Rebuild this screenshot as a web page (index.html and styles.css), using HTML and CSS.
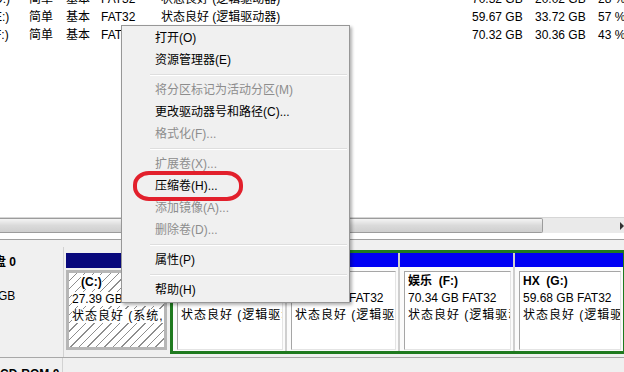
FILE: index.html
```html
<!DOCTYPE html>
<html lang="zh-CN">
<head>
  <meta charset="UTF-8" />
  <title>磁盘管理</title>
  <link rel="stylesheet" href="styles.css">
</head>
<body>

  <!-- 卷列表 -->
  <div class="list">
    <div class="rows">
      <div class="row"><span class="drv">(D:)</span><span>简单</span><span>基本</span><span>FAT32</span><span>状态良好 (逻辑驱动器)</span><span>70.32 GB</span><span>20.02 GB</span><span>28 %</span></div>
      <div class="row"><span class="drv">(E:)</span><span>简单</span><span>基本</span><span>FAT32</span><span>状态良好 (逻辑驱动器)</span><span>59.67 GB</span><span>33.72 GB</span><span>57 %</span></div>
      <div class="row"><span class="drv">(F:)</span><span>简单</span><span>基本</span><span>FAT32</span><span>状态良好 (逻辑驱动器)</span><span>70.32 GB</span><span>30.36 GB</span><span>43 %</span></div>
    </div>
  </div>

  <div class="hscroll">
    <div class="thumb"></div>
    <div class="track"><span class="arrow"></span></div>
  </div>

  <!-- 磁盘图形视图 -->
  <div class="panel">
    <div class="disk">
      <div class="disk-label">
        <div class="disk-name">磁盘 0</div>
        <div class="disk-line">基本</div>
        <div class="disk-line">298.09 GB</div>
        <div class="disk-line">联机</div>
      </div>
      <div class="parts">
        <div class="part-c">
          <div class="bar primary"></div>
          <div class="hatch">
            <div class="txt"><b class="cname">(C:)</b></div>
            <div class="txt"><span>27.39 GB NTFS</span></div>
            <div class="txt status"><span>状态良好 (系统, 启动, 页面文件)</span></div>
          </div>
        </div>
        <div class="ext">
          <div class="logical w-d">
            <div class="bar"></div>
            <div class="cell"><div class="cell-in">
              <div class="txt"><b>软件&nbsp;&nbsp;(D:)</b></div>
              <div class="txt">70.32 GB FAT32</div>
              <div class="txt status">状态良好 (逻辑驱动器)</div>
            </div></div>
          </div>
          <div class="logical w-e">
            <div class="bar"></div>
            <div class="cell"><div class="cell-in">
              <div class="txt"><b>文档&nbsp;&nbsp;(E:)</b></div>
              <div class="txt">59.67 GB FAT32</div>
              <div class="txt status">状态良好 (逻辑驱动器)</div>
            </div></div>
          </div>
          <div class="logical w-f">
            <div class="bar"></div>
            <div class="cell"><div class="cell-in">
              <div class="txt"><b>娱乐&nbsp;&nbsp;(F:)</b></div>
              <div class="txt">70.34 GB FAT32</div>
              <div class="txt status">状态良好 (逻辑驱动器)</div>
            </div></div>
          </div>
          <div class="logical w-g">
            <div class="bar"></div>
            <div class="cell"><div class="cell-in">
              <div class="txt"><b>HX&nbsp;&nbsp;(G:)</b></div>
              <div class="txt">59.68 GB FAT32</div>
              <div class="txt status">状态良好 (逻辑驱动器)</div>
            </div></div>
          </div>
        </div>
      </div>
    </div>
    <div class="cdrom">
      <div class="cd-label">CD-ROM 0</div>
    </div>
  </div>

  <!-- 右键菜单 -->
  <div class="menu">
    <div class="item">打开(O)</div>
    <div class="item">资源管理器(E)</div>
    <div class="sep"></div>
    <div class="item off">将分区标记为活动分区(M)</div>
    <div class="item">更改驱动器号和路径(C)...</div>
    <div class="item off">格式化(F)...</div>
    <div class="sep"></div>
    <div class="item off">扩展卷(X)...</div>
    <div class="item">压缩卷(H)...</div>
    <div class="item off">添加镜像(A)...</div>
    <div class="item off">删除卷(D)...</div>
    <div class="sep"></div>
    <div class="item">属性(P)</div>
    <div class="sep"></div>
    <div class="item">帮助(H)</div>
  </div>

  <div class="mark"></div>

</body>
</html>
```

FILE: styles.css
```css
body {
  margin: 0;
  width: 624px;
  height: 372px;
  overflow: hidden;
  position: relative;
  background: #fff;
  color: #000;
  font-family: "Liberation Sans", "Noto Sans CJK SC", sans-serif;
  font-size: 12px;
}

/* volume list */
.list {
  height: 217px;
  overflow: hidden;
}

.rows {
  margin-top: -10px;
}

.row {
  display: grid;
  grid-template-columns: 29px 37px 35px 60px 311px 63px 63px 40px;
  height: 18px;
  line-height: 18px;
  white-space: nowrap;
}

.drv {
  margin-left: -10px;
}

/* horizontal scrollbar */
.hscroll {
  display: flex;
  height: 16px;
  margin-bottom: 6px;
  background: #eaeaea;
  border-top: 1px solid #d6d6d6;
  box-sizing: border-box;
}

.thumb {
  width: 542px;
  background: linear-gradient(#f4f4f4, #dadada 50%, #cfcfcf);
  border: 1px solid #9c9c9c;
  border-left: none;
  border-radius: 0 2px 2px 0;
}

.track {
  flex: 1;
  position: relative;
}

.arrow {
  position: absolute;
  right: 0;
  top: 4px;
  border-left: 4px solid #333;
  border-top: 4px solid transparent;
  border-bottom: 4px solid transparent;
}

/* graphical view */
.panel {
  height: 133px;
  background: #f0f0f0;
  border-top: 1px solid #a0a0a0;
}

.disk {
  display: flex;
  height: 111px;
  margin-top: 7px;
  border-bottom: 1px solid #a8a8a8;
  box-sizing: border-box;
}

.disk-label {
  width: 63px;
  flex: none;
  padding-top: 7px;
  border-right: 1px solid #d2d2d2;
  line-height: 17px;
  white-space: nowrap;
  overflow: hidden;
}

.disk-name {
  margin-left: -18px;
  font-weight: bold;
}

.disk-line {
  margin-left: -42px;
}

.parts {
  flex: 1;
  display: flex;
  padding: 3px 0 0 2px;
  overflow: hidden;
}

.bar {
  height: 14px;
  background: #0000f4;
}

.bar.primary {
  height: 15px;
  background: #08087c;
}

.txt {
  height: 17px;
  line-height: 17px;
  white-space: nowrap;
  overflow: hidden;
}

.txt.status {
  letter-spacing: 1px;
}

.part-c {
  width: 101px;
  flex: none;
  margin-top: 3px;
}

.hatch {
  height: 80px;
  margin-top: 2px;
  padding: 1px 0 0 3px;
  box-sizing: border-box;
  border: 3px solid #b6b6b6;
  background: repeating-linear-gradient(135deg, #fff 0 5px, #8e8e8e 5px 6px);
  overflow: hidden;
}

.hatch span,
.hatch b {
  background: #fff;
}

.cname {
  margin-left: 9px;
}

.ext {
  flex: none;
  display: flex;
  gap: 2px;
  height: 104px;
  margin-left: 3px;
  border: 3px solid #1f7a1f;
  background: #cfcfcf;
  box-sizing: border-box;
}

.logical {
  display: flex;
  flex-direction: column;
  background: #fbfbfb;
  overflow: hidden;
}

.w-d { width: 112px; }
.w-e { width: 111px; }
.w-f { width: 113px; }
.w-g { width: 108px; }

.cell {
  flex: 1;
  padding: 4px 2px 1px 4px;
  display: flex;
}

.cell-in {
  flex: 1;
  padding: 1px 0 0 3px;
  background: #fff;
  border-top: 1px solid #a6a6a6;
  border-left: 1px solid #a6a6a6;
  border-right: 1px solid #e4e4e4;
  border-bottom: 1px solid #e4e4e4;
  overflow: hidden;
}

.cdrom {
  height: 20px;
}

.cd-label {
  width: 63px;
  height: 100%;
  padding: 8px 0 0 0;
  border-right: 1px solid #d2d2d2;
  font-weight: bold;
  line-height: 17px;
  white-space: nowrap;
  overflow: hidden;
  box-sizing: border-box;
}

/* context menu */
.menu {
  position: absolute;
  left: 121px;
  top: 25px;
  width: 229px;
  padding: 1px 0;
  box-sizing: border-box;
  background: #f0f0f0;
  border: 1px solid #979797;
  box-shadow: 2px 2px 3px rgba(0, 0, 0, 0.3);
}

.item {
  height: 22px;
  line-height: 22px;
  padding-left: 33px;
  white-space: nowrap;
}

.item.off {
  color: #8d8d8d;
}

.sep {
  height: 0;
  margin: 3px 2px 3px 28px;
  border-top: 1px solid #dedede;
  border-bottom: 1px solid #fff;
}

/* red annotation */
.mark {
  position: absolute;
  left: 133px;
  top: 171px;
  width: 110px;
  height: 30px;
  box-sizing: border-box;
  border: 4px solid #e2202c;
  border-radius: 16px / 14px;
}
```
